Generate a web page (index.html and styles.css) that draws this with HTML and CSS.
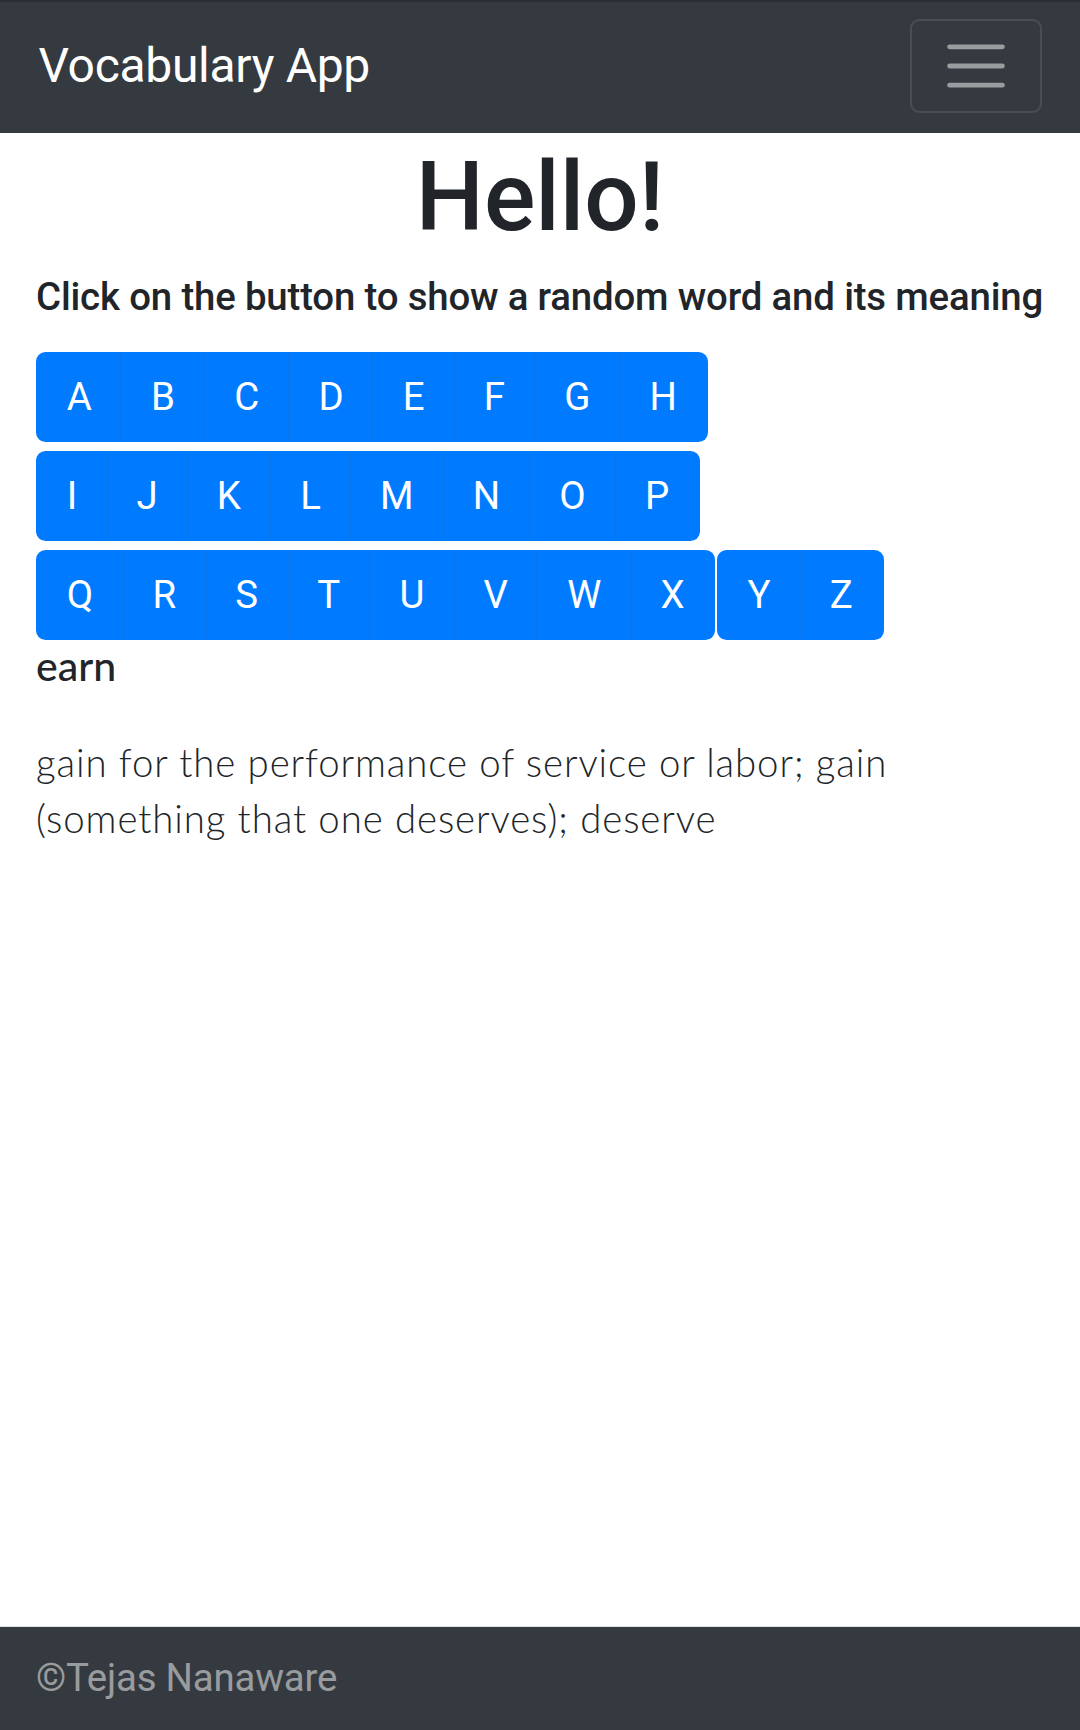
FILE: index.html
```html
<!DOCTYPE html>
<html lang="en">
<head>
<meta charset="utf-8">
<title>Vocabulary App</title>
<link rel="stylesheet" href="styles.css">
</head>
<body>
<nav class="navbar">
  <span class="brand">Vocabulary App</span>
  <button class="toggler" aria-label="Toggle navigation">
    <svg class="toggler-icon" viewBox="0 0 30 30" width="72" height="72"><path d="M4 7h22M4 15h22M4 23h22" stroke="rgba(255,255,255,0.5)" stroke-width="2" stroke-linecap="round" fill="none"/></svg>
  </button>
</nav>
<main class="container">
  <h1 class="title">Hello!</h1>
  <h6 class="subtitle">Click on the button to show a random word and its meaning</h6>
  <div class="keyboard">
    <div class="kb-row">
      <div class="btn-group"><button class="btn">A</button><button class="btn">B</button><button class="btn">C</button><button class="btn">D</button><button class="btn">E</button><button class="btn">F</button><button class="btn">G</button><button class="btn">H</button></div>
    </div>
    <div class="kb-row">
      <div class="btn-group"><button class="btn">I</button><button class="btn">J</button><button class="btn">K</button><button class="btn">L</button><button class="btn">M</button><button class="btn">N</button><button class="btn">O</button><button class="btn">P</button></div>
    </div>
    <div class="kb-row">
      <div class="btn-group"><button class="btn">Q</button><button class="btn">R</button><button class="btn">S</button><button class="btn">T</button><button class="btn">U</button><button class="btn">V</button><button class="btn">W</button><button class="btn">X</button></div>
      <div class="btn-group"><button class="btn">Y</button><button class="btn">Z</button></div>
    </div>
  </div>
  <h5 class="word">earn</h5>
  <p class="meaning">gain for the performance of service or labor; gain (something that one deserves); deserve</p>
</main>
<footer class="footer">
  <span class="copy">©Tejas Nanaware</span>
</footer>
</body>
</html>
```

FILE: styles.css
```css
* { box-sizing: border-box; }
html, body { margin: 0; padding: 0; }
body {
  width: 1080px;
  min-height: 1730px;
  display: flex;
  flex-direction: column;
  font-family: Roboto, "Liberation Sans", sans-serif;
  color: #212529;
  background: #fff;
  font-size: 38.4px;
  line-height: 1.5;
}
.navbar {
  background: #343a40;
  border-top: 2px solid #2b2f34;
  display: flex;
  align-items: center;
  justify-content: space-between;
  padding: 16.4px 38.4px 18.4px 38.4px;
}
.brand {
  color: #fff;
  font-size: 48px;
  line-height: 72px;
  padding: 12px 0;
  letter-spacing: -0.3px;
}
.toggler {
  display: flex;
  align-items: center;
  justify-content: center;
  width: 132px;
  height: 94px;
  padding: 0;
  background: transparent;
  border: 2.4px solid rgba(255,255,255,0.1);
  border-radius: 9.6px;
}
.toggler-icon { display: block; }
.container {
  flex: 1;
  padding: 0 36px;
}
.title {
  margin: 7px 0 19.2px;
  text-align: center;
  font-size: 96px;
  line-height: 1.2;
  font-weight: 500;
}
.subtitle {
  margin: 0;
  font-size: 38.4px;
  line-height: 1.2;
  font-weight: 500;
  letter-spacing: -0.17px;
  white-space: nowrap;
}
.keyboard {
  margin-top: 31.6px;
  display: flex;
  flex-direction: column;
  gap: 8.5px;
}
.kb-row {
  display: flex;
  gap: 1.4px;
}
.btn-group {
  display: inline-flex;
}
.btn {
  font-family: Roboto, "Liberation Sans", sans-serif;
  font-size: 38.4px;
  line-height: 1.5;
  font-weight: 400;
  color: #fff;
  background: #007bff;
  border: 2.4px solid #007bff;
  padding: 14.4px 28.8px;
  margin: 0;
  border-radius: 0;
}
.btn + .btn {
  margin-left: -2.4px;
  border-left-color: #0a76ea;
}
.btn:first-child { border-radius: 9.6px 0 0 9.6px; }
.btn:last-child { border-radius: 0 9.6px 9.6px 0; }
.word {
  margin: 1px 0 0;
  font-family: Lato, "Open Sans", sans-serif;
  font-size: 41px;
  line-height: 1.2;
  font-weight: 500;
}
.meaning {
  margin: 43.5px 0 0;
  font-family: Lato, "Open Sans", sans-serif;
  font-weight: 300;
  font-size: 38.4px;
  line-height: 56.3px;
  letter-spacing: 0.9px;
}
.footer {
  background: #343a40;
  border-top: 1px solid #dee2e6;
  padding: 22.2px 36px 24.2px;
  height: 104px;
}
.copy {
  color: rgba(255,255,255,0.5);
  font-size: 38.4px;
  line-height: 57.6px;
  letter-spacing: -0.2px;
}
```
